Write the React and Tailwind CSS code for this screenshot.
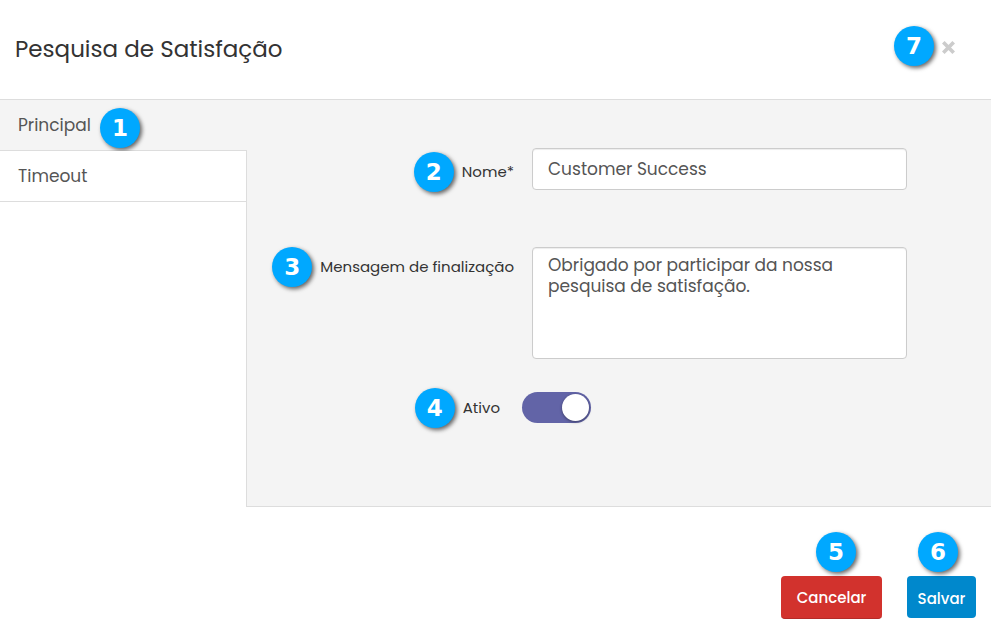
import React, { useState } from 'react';

const Badge = ({ number, className = '' }) => (
  <span
    aria-hidden="true"
    className={`flex h-10 w-10 shrink-0 items-center justify-center rounded-full bg-[#00a8ff] pt-px font-['DejaVu_Sans',sans-serif] text-[23px] leading-none font-bold text-white shadow-[2px_2px_4px_rgba(0,0,0,0.6)] ${className}`}
  >
    {number}
  </span>
);

const FormRow = ({ number, label, htmlFor, labelClass = 'pr-[18px]', children }) => (
  <div className="flex items-start">
    <div className={`flex w-[285px] shrink-0 items-center justify-end gap-2 ${labelClass}`}>
      <Badge number={number} />
      <label htmlFor={htmlFor} className="text-[15px] whitespace-nowrap text-[#333333]">
        {label}
      </label>
    </div>
    <div className="min-w-0 flex-1">{children}</div>
  </div>
);

const tabs = ['Principal', 'Timeout'];

const App = () => {
  const [activeTab, setActiveTab] = useState('Principal');
  const [name, setName] = useState('Customer Success');
  const [message, setMessage] = useState('Obrigado por participar da nossa pesquisa de satisfação.');
  const [active, setActive] = useState(true);

  return (
    <div className="min-h-screen bg-white font-['Poppins','Inter',sans-serif] text-[#333333]">
      {/* Header */}
      <header className="flex h-[100px] items-center justify-between border-b border-[#dddddd] pr-9 pl-[15px]">
        <h1 className="text-[23px]">Pesquisa de Satisfação</h1>
        <div className="flex items-center gap-2 pb-2">
          <Badge number={7} />
          <button type="button" aria-label="Fechar" className="cursor-pointer text-[#cccccc]">
            <svg className="mt-1 h-[13px] w-[13px]" viewBox="0 0 12 12" fill="none" stroke="currentColor" strokeWidth="3.4">
              <path d="M1.2 1.2l9.6 9.6M10.8 1.2l-9.6 9.6" />
            </svg>
          </button>
        </div>
      </header>

      {/* Body */}
      <div className="flex items-stretch">
        <nav className="w-[247px] shrink-0">
          {tabs.map((tab) => (
            <button
              key={tab}
              type="button"
              onClick={() => setActiveTab(tab)}
              className={`relative flex h-[51px] w-full cursor-pointer items-center border-b border-[#dddddd] pt-0.5 pl-[18px] text-[17px] text-[#555555] ${
                tab === activeTab ? 'bg-[#f4f4f4]' : 'border-r bg-white'
              }`}
            >
              {tab}
              {tab === 'Principal' && <Badge number={1} className="absolute top-2 left-[100px]" />}
            </button>
          ))}
          <div className="h-[305px] border-r border-[#dddddd]" />
        </nav>

        <form className="flex flex-1 flex-col border-b border-[#dddddd] bg-[#f4f4f4] pt-12 pr-[84px]">
          <FormRow number={2} label="Nome*" htmlFor="name" labelClass="pt-1 pr-[18px]">
            <input
              id="name"
              type="text"
              value={name}
              onChange={(e) => setName(e.target.value)}
              className="block h-[42px] w-full rounded border border-[#cccccc] bg-white px-[15px] text-[17px] text-[#555555] shadow-[inset_0_1px_1px_rgba(0,0,0,0.075)]"
            />
          </FormRow>
          <div className="h-[55px]" />
          <FormRow number={3} label="Mensagem de finalização" htmlFor="message">
            <textarea
              id="message"
              value={message}
              onChange={(e) => setMessage(e.target.value)}
              className="block h-28 w-full resize-none rounded border border-[#cccccc] bg-white px-[15px] py-[7px] text-[17px] leading-[21px] text-[#555555] shadow-[inset_0_1px_1px_rgba(0,0,0,0.075)]"
            />
          </FormRow>
          <div className="h-[29px]" />
          <FormRow number={4} label="Ativo" htmlFor="active" labelClass="pr-8">
            <input
              id="active"
              type="checkbox"
              role="switch"
              checked={active}
              onChange={(e) => setActive(e.target.checked)}
              className="relative mt-1 -ml-[10px] block h-[31px] w-[69px] cursor-pointer appearance-none rounded-full bg-[#cccccc] before:absolute before:top-[2px] before:left-[2px] before:h-[27px] before:w-[27px] before:rounded-full before:bg-white before:shadow-[0_1px_3px_rgba(0,0,0,0.4)] checked:bg-[#6264a7] checked:before:left-10"
            />
          </FormRow>
        </form>
      </div>

      {/* Footer */}
      <footer className="flex items-start justify-end gap-[25px] pt-[69px] pr-[15px]">
        <div className="relative">
          <Badge number={5} className="absolute -top-11 left-[35px]" />
          <button
            type="button"
            className="h-[43px] w-[101px] cursor-pointer rounded border-b border-[#b52b27] bg-[#d2322d] pt-0.5 text-[15px] font-medium text-white"
          >
            Cancelar
          </button>
        </div>
        <div className="relative">
          <Badge number={6} className="absolute -top-11 left-[11px]" />
          <button
            type="button"
            className="h-[42px] w-[69px] cursor-pointer rounded bg-[#0088cc] pt-1 text-[15px] font-medium text-white"
          >
            Salvar
          </button>
        </div>
      </footer>
    </div>
  );
};

export default App;
